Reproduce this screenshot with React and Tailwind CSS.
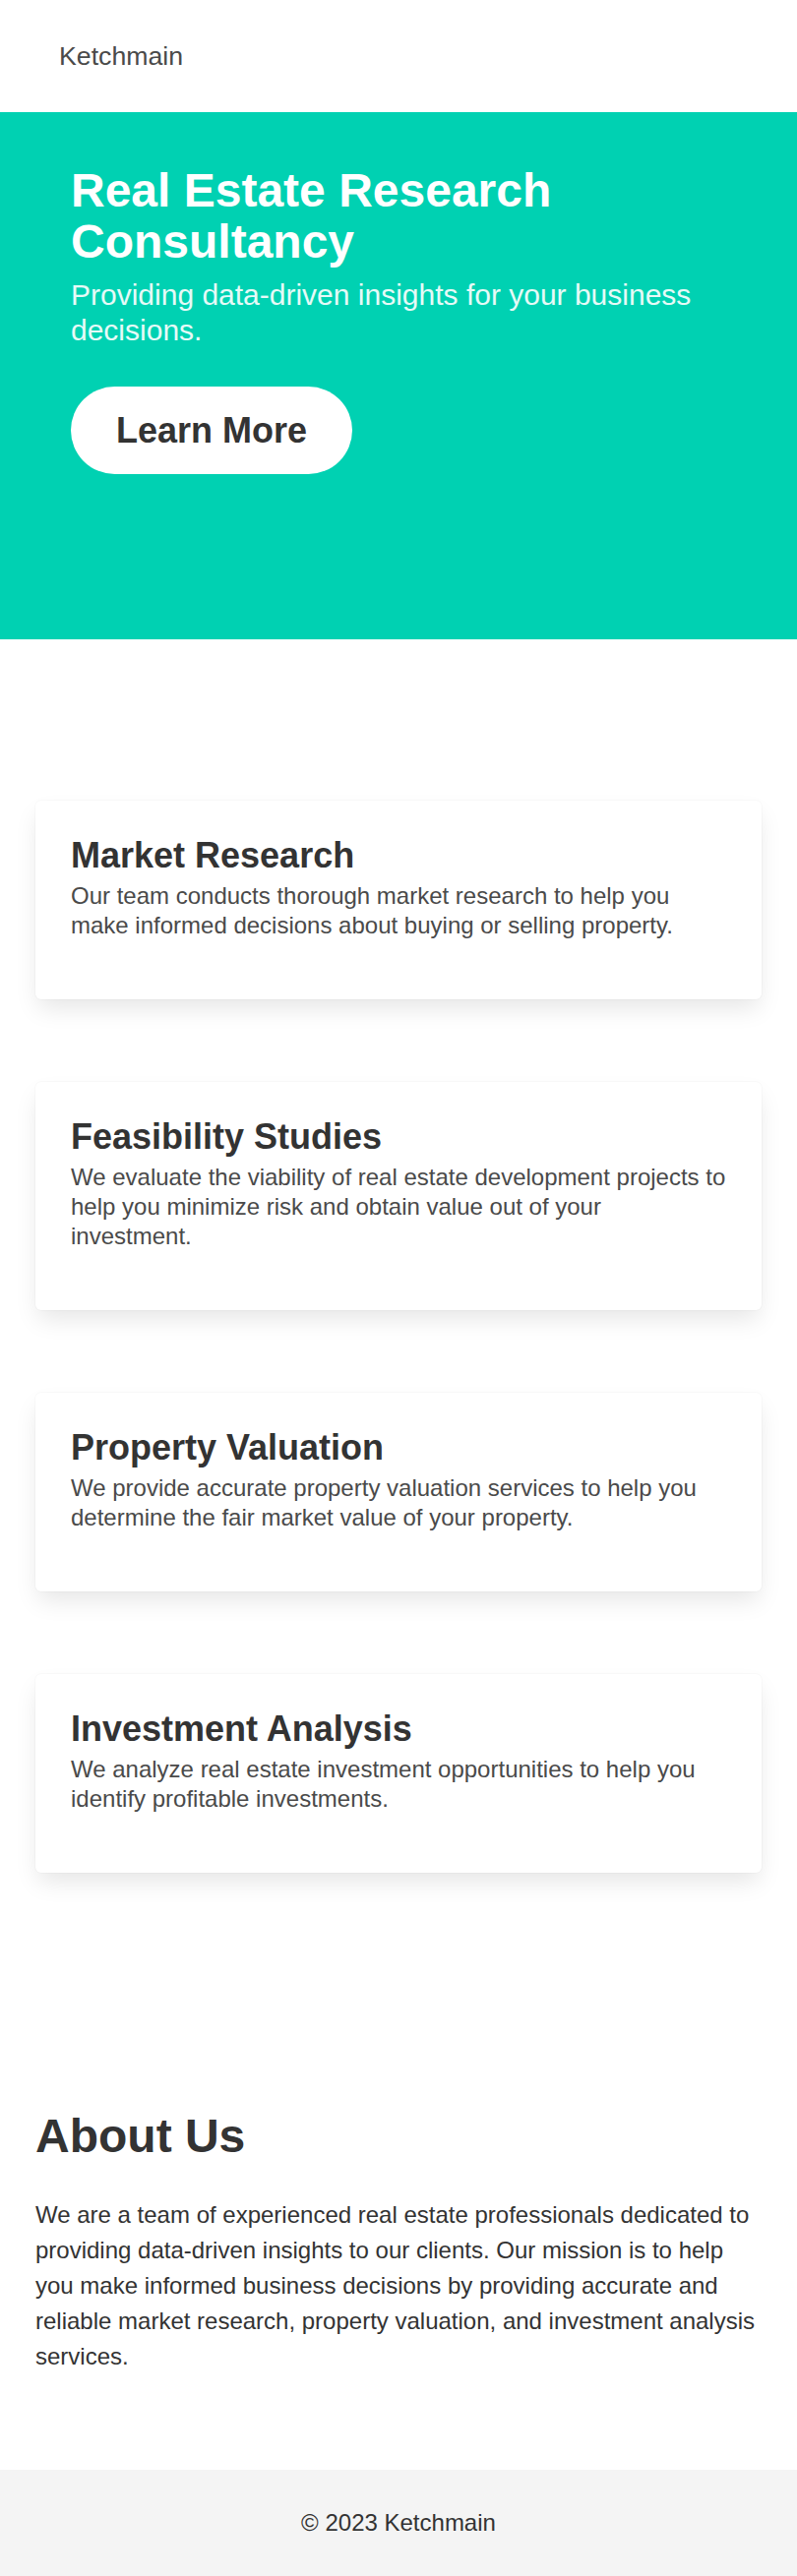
import React from 'react';

const services = [
  {
    title: 'Market Research',
    text: 'Our team conducts thorough market research to help you make informed decisions about buying or selling property.',
  },
  {
    title: 'Feasibility Studies',
    text: 'We evaluate the viability of real estate development projects to help you minimize risk and obtain value out of your investment.',
  },
  {
    title: 'Property Valuation',
    text: 'We provide accurate property valuation services to help you determine the fair market value of your property.',
  },
  {
    title: 'Investment Analysis',
    text: 'We analyze real estate investment opportunities to help you identify profitable investments.',
  },
];

export default function App() {
  return (
    <div className="min-h-screen bg-white font-['Liberation_Sans',Arial,sans-serif] text-[#333]">
      <header className="flex h-[114px] items-center pl-[60px]">
        <span className="text-[26.7px] text-[#4a4a4a]">Ketchmain</span>
      </header>

      <section className="h-[536px] bg-[#00d1b2] px-[72px] pt-[54px]">
        <h1 className="text-[48px] font-bold leading-[52px] text-white">Real Estate Research Consultancy</h1>
        <p className="mt-[10px] text-[30px] leading-[36px] text-white/90">
          Providing data-driven insights for your business decisions.
        </p>
        <button className="mt-[39px] h-[89px] rounded-full bg-white px-[46px] text-[36px] font-bold leading-[40px] text-[#333]">
          Learn More
        </button>
      </section>

      <section className="flex flex-col gap-[84px] px-9 pt-[164px]">
        {services.map((s) => (
          <div
            key={s.title}
            className="rounded-md bg-white px-9 pt-9 pb-[60px] shadow-[0_12px_24px_-3px_rgba(10,10,10,0.1),0_0_0_1px_rgba(10,10,10,0.02)]"
          >
            <h3 className="text-[36px] font-bold leading-[40px] text-[#333]">{s.title}</h3>
            <p className="mt-[6px] text-[24px] leading-[30px] text-[#4a4a4a]">{s.text}</p>
          </div>
        ))}
      </section>

      <section className="px-9 pt-[244px] pb-[97px]">
        <h2 className="text-[48px] font-bold leading-[48px] text-[#333]">About Us</h2>
        <p className="mt-[38px] text-[24px] leading-[36px] text-[#333]">
          We are a team of experienced real estate professionals dedicated to providing data-driven insights to our
          clients. Our mission is to help you make informed business decisions by providing accurate and reliable
          market research, property valuation, and investment analysis services.
        </p>
      </section>

      <footer className="flex h-[108px] items-center justify-center bg-[#f4f4f4] text-[24px] text-[#333]">
        © 2023 Ketchmain
      </footer>
    </div>
  );
}
